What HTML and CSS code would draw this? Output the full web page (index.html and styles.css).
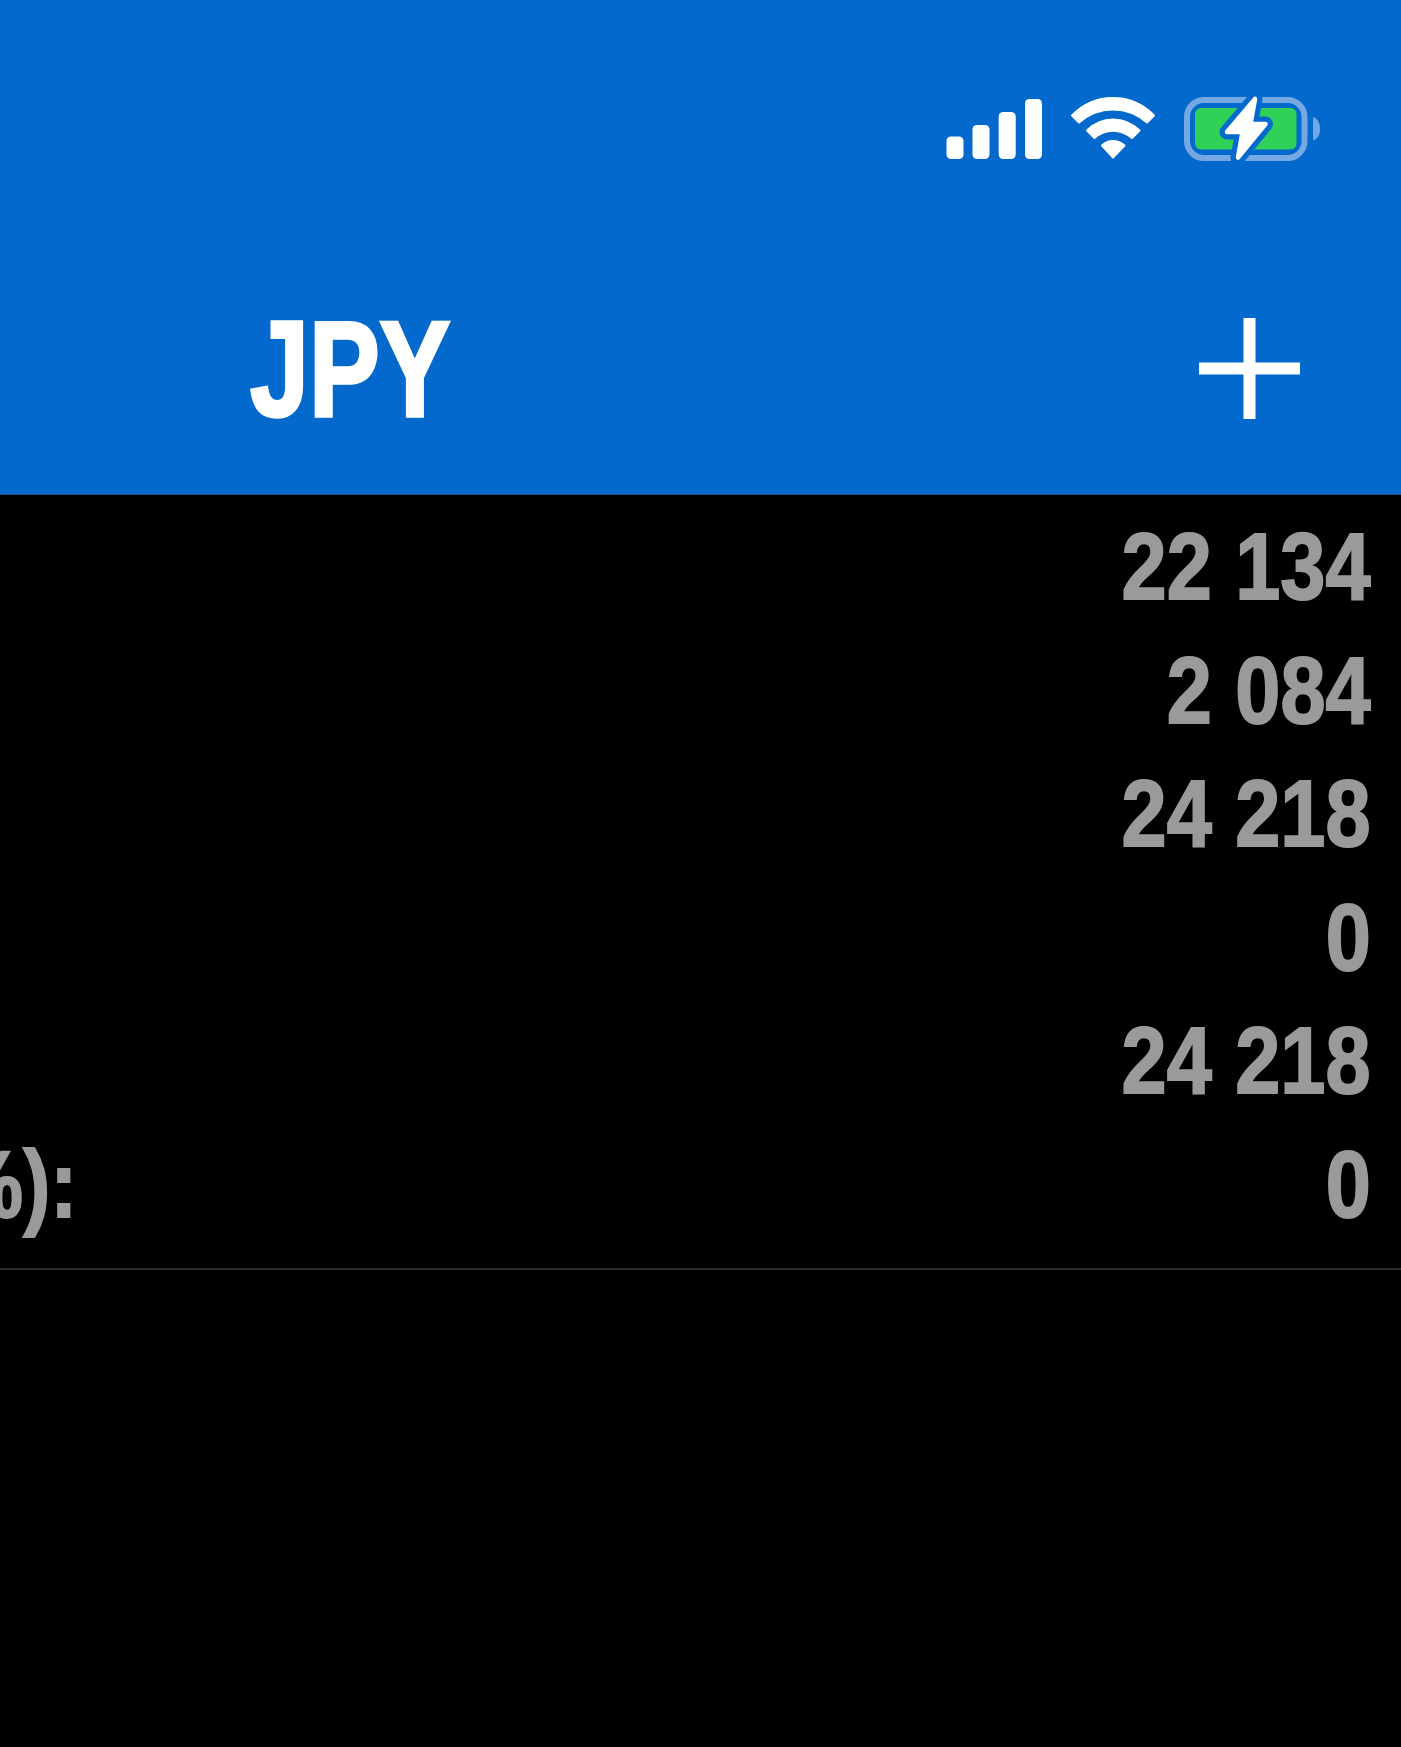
FILE: index.html
```html
<!DOCTYPE html>
<html lang="en">
<head>
	<meta charset="UTF-8">
	<meta name="viewport" content="width=device-width, initial-scale=1.0">
	<title>JPY</title>
	<link rel="stylesheet" href="styles.css">
</head>
<body>
	<header class="header">
		<div class="status">
			<svg class="signal" width="96" height="62" viewBox="0 0 96 62" fill="#fff">
				<rect x="0.5" y="37.5" width="17" height="22.500" rx="4.5"/>
				<rect x="26.5" y="26" width="17" height="34" rx="4.5"/>
				<rect x="52.7" y="13" width="17" height="47" rx="4.5"/>
				<rect x="79" y="0" width="17" height="60" rx="4.5"/>
			</svg>
			<svg class="wifi" width="86" height="64" viewBox="0 0 86 64" fill="#fff" stroke="#fff" stroke-width="2" stroke-linejoin="round">
				<path d="M2 18.500Q19 1 43 1T84 18.500L77 25.500Q62 12.500 43 12.500T9 25.500Z"/>
				<path d="M17 33.500Q28 22.500 43 22.500T69.500 33.500L62 41Q53 33.800 43 33.800T24.500 41Z"/>
				<path d="M32 48.500Q36.500 44 43 44T54.500 48.500L43 60.500Z"/>
			</svg>
			<svg class="battery" width="138" height="68" viewBox="0 0 138 68">
				<rect x="3" y="5" width="117.500" height="58" rx="17" fill="none" stroke="#76a9e4" stroke-width="6"/>
				<rect x="11" y="13" width="101.500" height="41.500" rx="6" fill="#30d158"/>
				<path d="M129 22C134 23.500 136 28.500 136 34S134 44 129 45.500Z" fill="#76a9e4"/>
				<g stroke-linejoin="round">
					<path d="M71 4L66.500 29H81.500L54 62.500L58.500 37H43Z" fill="#0369cc" stroke="#0369cc" stroke-width="15"/>
					<path d="M71 4L66.500 29H81.500L54 62.500L58.500 37H43Z" fill="#fff" stroke="#fff" stroke-width="4.500"/>
				</g>
			</svg>
		</div>
		<div class="nav">
			<h1 class="title">JPY</h1>
			<svg class="plus" width="101" height="101" viewBox="0 0 101 101" fill="#fff">
				<path d="M44.500 0H56.500V44.500H101V56.500H56.500V101H44.500V56.500H0V44.500H44.500Z"/>
			</svg>
		</div>
	</header>
	<div class="totals">
		<div class="row"><span class="value">22 134</span></div>
		<div class="row"><span class="value">2 084</span></div>
		<div class="row"><span class="value">24 218</span></div>
		<div class="row"><span class="value">0</span></div>
		<div class="row"><span class="value">24 218</span></div>
		<div class="row"><span class="label">%):</span><span class="value">0</span></div>
	</div>
</body>
</html>
```
FILE: styles.css
```css
body {
	margin: 0;
	background: #000;
	color: #9a9a9a;
	font-family: "Liberation Sans", Arial, sans-serif;
	font-weight: bold;
	overflow: hidden;
}
svg {
	display: block;
	flex: none;
}
.header {
	box-sizing: border-box;
	height: 495px;
	padding-top: 95px;
	background: #0369cc;
	border-bottom: 1px solid #1c4f86;
}
.status {
	display: flex;
	justify-content: flex-end;
	padding-right: 79px;
}
.signal {
	margin-top: 4px;
}
.wifi {
	margin: 2px 28px 0 28px;
}
.nav {
	display: flex;
	justify-content: space-between;
	align-items: center;
	height: 160px;
	margin-top: 125px;
	padding: 0 101px 0 250px;
}
/* condensed look */
.title {
	margin: 4px 0 0;
	color: #fff;
	font-size: 135px;
	line-height: 160px;
	transform: scaleX(0.785);
	transform-origin: left;
	-webkit-text-stroke: 3.5px #fff;
}
.totals {
	padding: 10px 30px 21.4px 0;
	border-bottom: 2px solid #2b2b2b;
}
.row {
	display: flex;
	height: 123.6px;
	font-size: 95px;
	line-height: 123.6px;
	white-space: nowrap;
	-webkit-text-stroke: 2px #9a9a9a;
}
.value {
	margin-left: auto;
	word-spacing: 1px;
	transform: scaleX(0.854);
	transform-origin: right;
}
.label {
	margin-left: -49px;
	transform: scaleX(0.854);
	transform-origin: left;
}
```
